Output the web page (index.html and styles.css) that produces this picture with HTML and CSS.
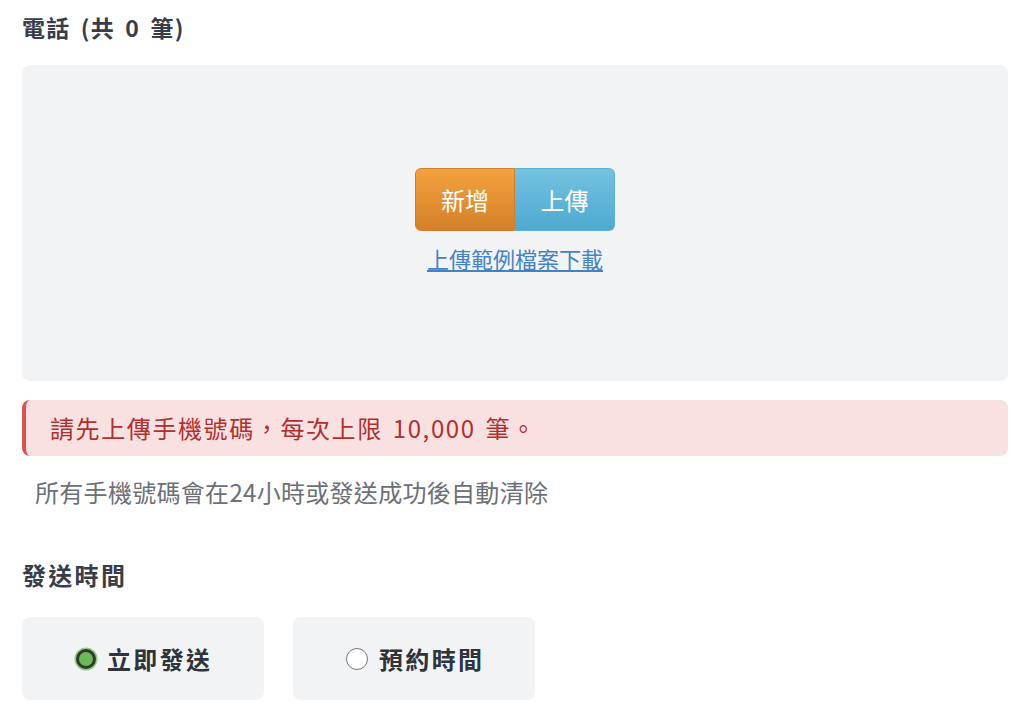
FILE: index.html
```html
<!DOCTYPE html>
<html lang="zh-Hant">
<head>
    <meta charset="UTF-8">
    <meta name="viewport" content="width=device-width, initial-scale=1.0">
    <title>電話</title>
    <link rel="stylesheet" href="styles.css">
</head>
<body>
    <div class="page">
        <h3 class="section-title phone-title">電話 (共 0 筆)</h3>

        <!-- Upload area -->
        <div class="upload-box">
            <div class="btn-group">
                <button class="btn btn-add">新增</button>
                <button class="btn btn-upload">上傳</button>
            </div>
            <a href="#" class="sample-link">上傳範例檔案下載</a>
        </div>

        <div class="alert">請先上傳手機號碼，每次上限 10,000 筆。</div>
        <p class="hint">所有手機號碼會在24小時或發送成功後自動清除</p>

        <!-- Send time -->
        <h3 class="section-title send-title">發送時間</h3>
        <div class="radio-row">
            <label class="radio-card">
                <span class="radio checked"></span>
                <span class="radio-text">立即發送</span>
            </label>
            <label class="radio-card">
                <span class="radio"></span>
                <span class="radio-text">預約時間</span>
            </label>
        </div>
    </div>
</body>
</html>
```

FILE: styles.css
```css
body {
    font-family: "Noto Sans CJK TC", "Noto Sans", sans-serif;
    margin: 0;
    padding: 0;
    background-color: #fff;
    color: #3a3f4b;
}
.page {
    padding: 9px 16px 0 22px;
}
.section-title {
    font-weight: bold;
    color: #383d49;
    margin: 0;
    line-height: 36px;
}
.phone-title {
    font-size: 23px;
    letter-spacing: 1.2px;
    word-spacing: 4px;
}
.upload-box {
    background: #f2f3f5;
    border-radius: 8px;
    margin-top: 20px;
    height: 316px;
    display: flex;
    flex-direction: column;
    align-items: center;
    padding-top: 103px;
    box-sizing: border-box;
}
.btn-group {
    display: flex;
}
.btn {
    font-family: inherit;
    font-size: 24px;
    color: #fff;
    width: 100px;
    height: 63px;
    border: 1px solid;
    cursor: pointer;
    padding: 0;
}
.btn-add {
    background: linear-gradient(#f3a23d, #d4802a);
    border-color: #cf7f2c;
    border-radius: 6px 0 0 6px;
}
.btn-upload {
    background: linear-gradient(#74c2e0, #4ea9d1);
    border-color: #5ab2d8;
    border-radius: 0 6px 6px 0;
    border-left: none;
}
.sample-link {
    margin-top: 12px;
    font-size: 22px;
    color: #4382c6;
    text-decoration: underline;
    line-height: 30px;
}
.alert {
    margin-top: 19px;
    background: #f9e1e2;
    border-left: 4px solid #d9534f;
    border-radius: 8px;
    color: #b0302e;
    font-size: 24px;
    letter-spacing: 1.6px;
    word-spacing: 3px;
    height: 56px;
    line-height: 56px;
    padding-left: 24px;
}
.hint {
    margin: 21px 0 0 13px;
    font-size: 24px;
    letter-spacing: 0.3px;
    color: #6b6f76;
    line-height: 30px;
}
.send-title {
    margin-top: 50px;
    font-size: 24px;
    letter-spacing: 2.3px;
}
.radio-row {
    display: flex;
    gap: 29px;
    margin-top: 24px;
}
.radio-card {
    width: 242px;
    height: 83px;
    background: #f2f3f5;
    border-radius: 8px;
    display: flex;
    align-items: center;
    justify-content: center;
    gap: 11px;
    color: #2f333b;
    cursor: pointer;
}
.radio-text {
    font-size: 24px;
    font-weight: bold;
    letter-spacing: 2.3px;
    margin-right: -2.3px;
}
.radio {
    width: 22px;
    height: 22px;
    border-radius: 50%;
    border: 1.5px solid #777;
    background: #fff;
    box-sizing: border-box;
}
.radio.checked {
    width: 20px;
    height: 20px;
    background: #6cb85a;
    border: 3px solid #2f3a2c;
    box-shadow: 0 0 0 1.5px #8fcc7f;
}
```
